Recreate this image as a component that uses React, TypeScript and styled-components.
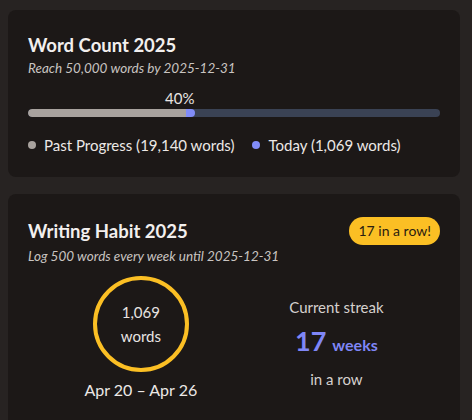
import React from "react";
import styled, { createGlobalStyle } from "styled-components";

const Global = createGlobalStyle`
  html, body { margin: 0; padding: 0; background: #272322; }
  body { font-family: Lato, "Open Sans", sans-serif; color: #f2efee; }
`;

const Page = styled.div`
  padding: 10px 12px 0 8px;
  display: flex;
  flex-direction: column;
  gap: 17px;
`;

const Card = styled.section`
  background: #1c1817;
  border-radius: 8px;
  padding: 23px 20px 23px 20px;
`;

const HeaderRow = styled.div`
  display: flex;
  justify-content: space-between;
  align-items: center;
`;

const Title = styled.h2`
  margin: 0;
  font-size: 18.5px;
  font-weight: 700;
  line-height: 24px;
  color: #f2efee;
`;

const Subtitle = styled.p`
  margin: 2px 0 0;
  font-size: 13.5px;
  font-style: italic;
  color: #c9c4c1;
  line-height: 18px;
`;

const Badge = styled.span`
  background: #fbbf24;
  color: #2a2010;
  border-radius: 14px;
  padding: 0 9px;
  height: 28px;
  line-height: 28px;
  font-size: 14px;
`;

const ProgressWrap = styled.div`
  margin-top: 12px;
`;

const PercentRow = styled.div`
  position: relative;
  height: 20px;
`;

const Percent = styled.span`
  position: absolute;
  top: 0;
  transform: translateX(-100%);
  font-size: 15px;
  color: #e8e4e2;
`;

const Track = styled.div`
  height: 8px;
  border-radius: 4px;
  background: #3a4254;
  display: flex;
  overflow: hidden;
`;

const Segment = styled.div<{ $color: string; $round?: boolean }>`
  height: 100%;
  background: ${(p) => p.$color};
  border-radius: ${(p) => (p.$round ? "0 4px 4px 0" : "4px 0 0 4px")};
`;

const Legend = styled.div`
  display: flex;
  gap: 18px;
  margin-top: 19px;
  font-size: 15px;
  color: #ece8e6;
`;

const LegendItem = styled.span`
  display: flex;
  align-items: center;
  gap: 8px;
`;

const Dot = styled.span<{ $color: string }>`
  width: 8px;
  height: 8px;
  border-radius: 50%;
  background: ${(p) => p.$color};
`;

const Stats = styled.div`
  display: flex;
  justify-content: center;
  align-items: flex-start;
  gap: 92px;
  margin-top: 11px;
  padding-bottom: 20px;
`;

const Col = styled.div<{ $offset?: number }>`
  display: flex;
  flex-direction: column;
  align-items: center;
  padding-top: ${(p) => p.$offset ?? 0}px;
`;

const Ring = styled.div`
  width: 88px;
  height: 88px;
  border: 4px solid #fbbf24;
  border-radius: 50%;
  display: flex;
  flex-direction: column;
  align-items: center;
  justify-content: center;
  font-size: 15px;
  line-height: 24px;
  color: #e8e4e2;
`;

const Range = styled.div`
  margin-top: 8px;
  font-size: 16px;
  color: #ece8e6;
`;

const Muted = styled.div`
  font-size: 15px;
  color: #d6d1ce;
`;

const Streak = styled.div`
  margin: 8px 0 13px;
  color: #7f86f6;
  font-weight: 700;
  display: flex;
  align-items: baseline;
  gap: 6px;
`;

const Big = styled.span`
  font-size: 27px;
`;

const Small = styled.span`
  font-size: 16px;
`;

export default function App() {
  const past = 19140 / 50000;
  const today = 1069 / 50000;
  const total = past + today;
  return (
    <>
      <Global />
      <Page>
        <Card>
          <Title>Word Count 2025</Title>
          <Subtitle>Reach 50,000 words by 2025-12-31</Subtitle>
          <ProgressWrap>
            <PercentRow>
              <Percent style={{ left: `${total * 100}%` }}>40%</Percent>
            </PercentRow>
            <Track>
              <Segment $color="#a8a29e" style={{ width: `${past * 100}%` }} />
              <Segment $color="#818cf8" $round style={{ width: `${today * 100}%` }} />
            </Track>
          </ProgressWrap>
          <Legend>
            <LegendItem>
              <Dot $color="#a8a29e" />
              Past Progress (19,140 words)
            </LegendItem>
            <LegendItem>
              <Dot $color="#818cf8" />
              Today (1,069 words)
            </LegendItem>
          </Legend>
        </Card>
        <Card>
          <HeaderRow>
            <Title>Writing Habit 2025</Title>
            <Badge>17 in a row!</Badge>
          </HeaderRow>
          <Subtitle>Log 500 words every week until 2025-12-31</Subtitle>
          <Stats>
            <Col>
              <Ring>
                <span>1,069</span>
                <span>words</span>
              </Ring>
              <Range>Apr 20 – Apr 26</Range>
            </Col>
            <Col $offset={22}>
              <Muted>Current streak</Muted>
              <Streak>
                <Big>17</Big>
                <Small>weeks</Small>
              </Streak>
              <Muted>in a row</Muted>
            </Col>
          </Stats>
        </Card>
      </Page>
    </>
  );
}
